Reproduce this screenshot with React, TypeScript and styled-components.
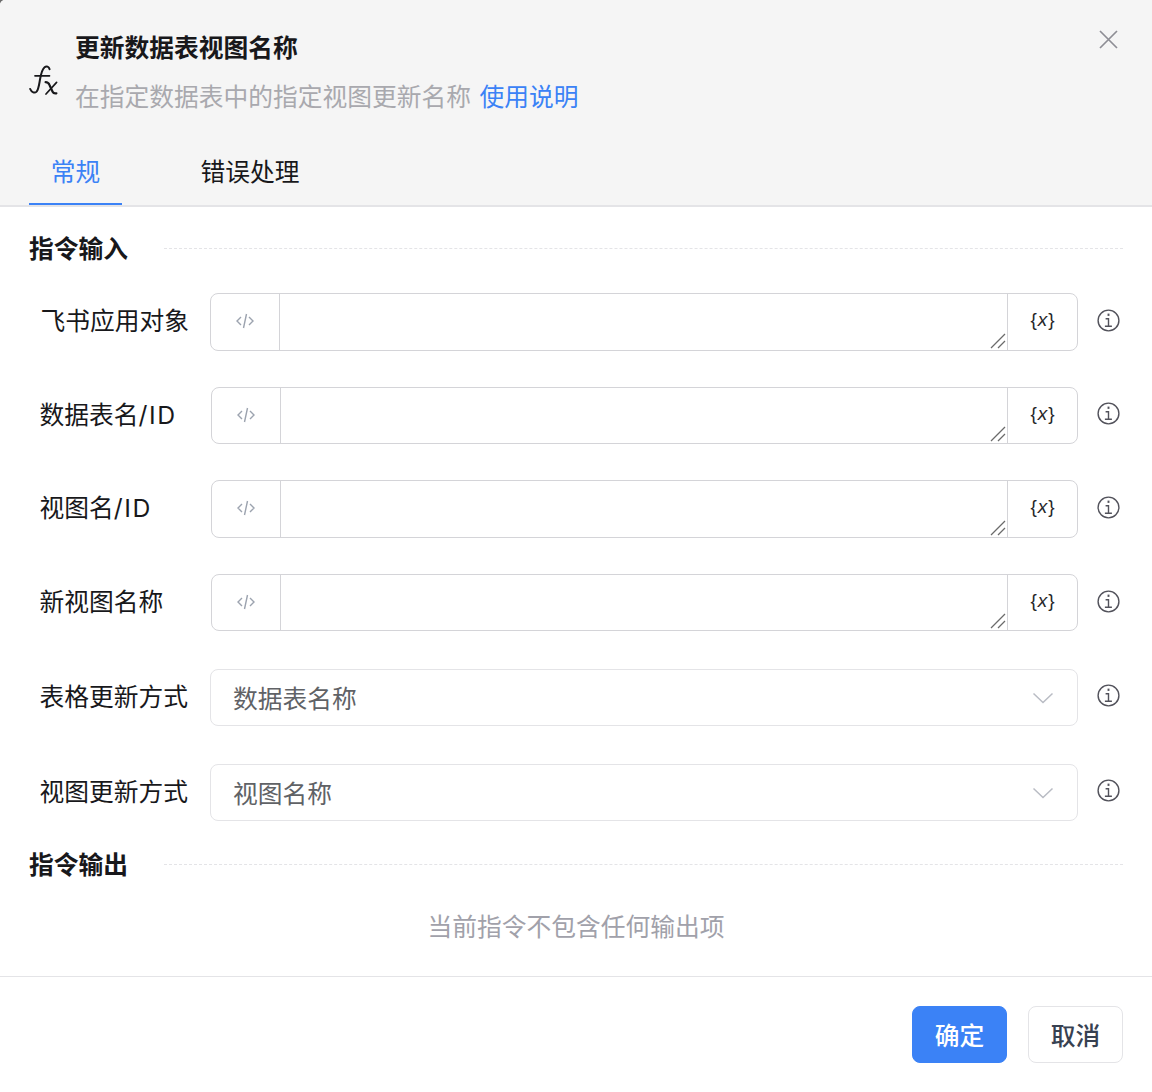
import { createGlobalStyle } from 'styled-components';
import styled from 'styled-components';

/* —— tokens —— */
const blue = '#3b82f6';
const line = '#d4d4d8';
const soft = '#e4e4e7';
const stack = 'Inter, "Noto Sans CJK SC", "Noto Sans", sans-serif';

const Global = createGlobalStyle`
  html, body { margin: 0; padding: 0; background: #6b6b6b; }
  * { box-sizing: border-box; }
  body { font-family: ${stack}; font-size: 24.75px; color: #18181b; }
`;

const Dialog = styled.div`
  width: 1152px;
  height: 1092px;
  background: #fff;
  border-top-left-radius: 5px;
  display: flex;
  flex-direction: column;
  overflow: hidden;
`;

/* —— header —— */
const Header = styled.header`
  position: relative;
  height: 207px;
  flex: none;
  background: #f5f5f5;
  border-bottom: 2px solid ${soft};
  padding: 30px 29px 0;
`;
const Head = styled.div`
  display: flex;
  align-items: center;
  gap: 16px;
`;
const FxMark = styled.div`
  width: 30px;
  flex: none;
  margin-top: 14px;
  svg { display: block; }
`;
const Title = styled.div`
  font-weight: 700;
  line-height: 37px;
`;
const Desc = styled.div`
  line-height: 37px;
  margin-top: 12px;
  color: #a9a9ae;
`;
const DocLink = styled.a`
  color: ${blue};
  margin-left: 8.5px;
`;
const Close = styled.button`
  position: absolute;
  top: 29px;
  right: 33px;
  width: 21px;
  height: 21px;
  padding: 0;
  border: 0;
  background: none;
  display: flex;
  svg { display: block; }
`;
const Tabs = styled.nav`
  display: flex;
  margin-top: 32px;
`;
const Tab = styled.div<{ $active?: boolean }>`
  width: ${p => (p.$active ? '93px' : 'auto')};
  margin-right: ${p => (p.$active ? 78.5 : 0)}px;
  height: 57px;
  text-align: center;
  line-height: 48px;
  color: ${p => (p.$active ? blue : '#18181b')};
  border-bottom: 2px solid ${p => (p.$active ? blue : 'transparent')};
`;

/* —— body —— */
const Body = styled.main`
  flex: 1;
  padding: 23px 29px 0;
  background: #fff;
`;
const Section = styled.div<{ $gap?: number }>`
  display: flex;
  align-items: center;
  height: 37px;
  font-weight: 700;
  margin-top: ${p => p.$gap ?? 0}px;
  span { position: relative; top: -1.5px; }
`;
const Rule = styled.div`
  flex: 1;
  margin-left: 36px;
  border-top: 1px dashed ${soft};
`;
const Row = styled.div<{ $top: number }>`
  display: flex;
  align-items: center;
  height: 57.5px;
  margin-top: ${p => p.$top}px;
`;
const Label = styled.label<{ $width: number; $indent: number }>`
  flex: none;
  width: ${p => p.$width}px;
  padding-left: ${p => p.$indent}px;
  line-height: 37px;
  white-space: nowrap;
`;
const Latin = styled.span`
  letter-spacing: 1.6px;
`;
const Field = styled.div`
  flex: 1;
  display: flex;
  height: 100%;
  border: 1px solid ${line};
  border-radius: 8px;
  background: #fff;
  overflow: hidden;
`;
const CodeCell = styled.div`
  flex: none;
  width: 69px;
  display: flex;
  align-items: center;
  justify-content: center;
  border-right: 1px solid ${line};
  padding-bottom: 1px;
  svg { display: block; }
`;
const AreaWrap = styled.div`
  flex: 1;
  min-width: 0;
  position: relative;
  display: flex;
`;
const Area = styled.textarea`
  flex: 1;
  min-width: 0;
  border: 0;
  outline: 0;
  padding: 0 8px;
  resize: none;
  background: transparent;
`;
const Grip = styled.svg`
  position: absolute;
  right: 1px;
  bottom: 1px;
  display: block;
  pointer-events: none;
`;
const VarCell = styled.div`
  flex: none;
  width: 70px;
  display: flex;
  align-items: center;
  justify-content: center;
  border-left: 1px solid ${line};
  font-family: "Liberation Sans", sans-serif;
  font-size: 19px;
  color: #27272a;
  padding-bottom: 3px;
  i { margin: 0 1px; }
`;
const Select = styled.div`
  flex: 1;
  height: 100%;
  display: flex;
  align-items: center;
  justify-content: space-between;
  padding: 0 23px 0 22px;
  border: 1px solid ${soft};
  border-radius: 8px;
  color: #606266;
  svg { display: block; }
`;
const Value = styled.span`
  line-height: 37px;
  position: relative;
  top: 2px;
`;
const InfoBtn = styled.div<{ $up: number }>`
  flex: none;
  width: 45px;
  padding-left: 19px;
  position: relative;
  top: -${p => p.$up}px;
  svg { display: block; }
`;
const Empty = styled.div`
  text-align: center;
  color: #a1a1aa;
  line-height: 37px;
  margin-top: 25.5px;
`;

/* —— footer —— */
const Footer = styled.footer`
  flex: none;
  height: 116px;
  background: #fff;
  border-top: 1px solid ${soft};
  display: flex;
  justify-content: flex-end;
  gap: 21px;
  padding: 29px 29px 0;
`;
const Btn = styled.button<{ $primary?: boolean }>`
  width: 95px;
  height: 57px;
  padding: 0 0 2px;
  border-radius: 8px;
  font: inherit;
  font-weight: 500;
  border: 1px solid ${p => (p.$primary ? blue : soft)};
  background: ${p => (p.$primary ? blue : '#fff')};
  color: ${p => (p.$primary ? '#fff' : '#374151')};
`;

/* —— icons —— */
const FxIcon = () => (
  <svg width="31" height="32" viewBox="0 0 31 32" fill="none" stroke="#18181b" strokeLinecap="round">
    <path d="M20.6 5.2C19.9 2.6 17.6 1.6 15.6 3.2 12.8 5.4 12 10 11 15.5 10.1 20.5 9.6 25.5 7.6 27.6 5.8 29.4 2.6 28.6 1.2 25" strokeWidth="2" />
    <path d="M6 11.8H20.5" strokeWidth="1.7" />
    <path d="M16.6 18.2c2 0 3 .6 4 3l3 6.5c.6 1.3 1.8 2 3.8 1.6" strokeWidth="2.2" />
    <path d="M27.6 18.4 17 30" strokeWidth="1.7" />
  </svg>
);
const CodeIcon = () => (
  <svg width="20" height="18" viewBox="0 0 20 18" fill="none" stroke="#9ca3af" strokeWidth="1.4">
    <path d="M6 5 2 9l4 4M14 5l4 4-4 4M11.5 2 8.5 16" />
  </svg>
);
const GripIcon = () => (
  <Grip width="16" height="16" viewBox="0 0 16 16" fill="none" stroke="#6b6b6b" strokeWidth="1.3">
    <path d="M1 15 15 1M8 15l7-7" />
  </Grip>
);
const InfoIcon = () => (
  <svg width="23" height="23" viewBox="0 0 23 23" fill="none" stroke="#52525b" strokeWidth="1.4">
    <circle cx="11.5" cy="11.5" r="10.4" />
    <path d="M8.6 9.7h2.9v7.4M7.9 17.2h7" />
    <path d="M11.5 4.6v2.3" strokeWidth="1.9" />
  </svg>
);
const Chevron = () => (
  <svg width="22" height="12" viewBox="0 0 22 12" fill="none" stroke="#b9bcc4" strokeWidth="1.5">
    <path d="M1.5 1.5 11 10.5l9.5-9" />
  </svg>
);

const inputs = [
  { label: <>飞书应用对象</>, key: 'app', width: 181, indent: 11.5, top: 26 },
  { label: <>数据表名<Latin>/ID</Latin></>, key: 'table', width: 182, indent: 10.5, top: 36 },
  { label: <>视图名<Latin>/ID</Latin></>, key: 'view', width: 182, indent: 10.5, top: 36 },
  { label: <>新视图名称</>, key: 'name', width: 182, indent: 10.5, top: 36.4 },
];
const selects = [
  { label: '表格更新方式', value: '数据表名称', top: 37.4 },
  { label: '视图更新方式', value: '视图名称', top: 37.5 },
];

export default function App() {
  return (
    <Dialog>
      <Global />
      <Header>
        <Head>
          <FxMark><FxIcon /></FxMark>
          <div>
            <Title>更新数据表视图名称</Title>
            <Desc>
              在指定数据表中的指定视图更新名称
              <DocLink>使用说明</DocLink>
            </Desc>
          </div>
        </Head>
        <Close aria-label="close">
          <svg width="21" height="21" viewBox="0 0 21 21" stroke="#8e8e95" strokeWidth="1.7">
            <path d="M2 2l17 17M19 2 2 19" />
          </svg>
        </Close>
        <Tabs>
          <Tab $active>常规</Tab>
          <Tab>错误处理</Tab>
        </Tabs>
      </Header>
      <Body>
        <Section><span>指令输入</span><Rule /></Section>
        {inputs.map(r => (
          <Row key={r.key} $top={r.top}>
            <Label $width={r.width} $indent={r.indent}>{r.label}</Label>
            <Field>
              <CodeCell><CodeIcon /></CodeCell>
              <AreaWrap>
                <Area />
                <GripIcon />
              </AreaWrap>
              <VarCell>{'{'}<i>x</i>{'}'}</VarCell>
            </Field>
            <InfoBtn $up={1.5}><InfoIcon /></InfoBtn>
          </Row>
        ))}
        {selects.map(r => (
          <Row key={r.label} $top={r.top}>
            <Label $width={181} $indent={10.5}>{r.label}</Label>
            <Select>
              <Value>{r.value}</Value>
              <Chevron />
            </Select>
            <InfoBtn $up={2.2}><InfoIcon /></InfoBtn>
          </Row>
        ))}
        <Section $gap={25}><span>指令输出</span><Rule /></Section>
        <Empty>当前指令不包含任何输出项</Empty>
      </Body>
      <Footer>
        <Btn $primary>确定</Btn>
        <Btn>取消</Btn>
      </Footer>
    </Dialog>
  );
}
